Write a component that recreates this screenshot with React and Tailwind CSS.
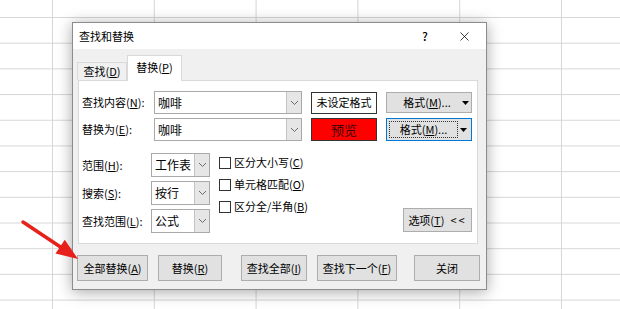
import React from 'react';
import { X } from 'lucide-react';

// small grey chevron used in the combo boxes
const Chevron = () => (
  <svg width="9" height="6" viewBox="0 0 9 6" fill="none">
    <path d="M1 1l3.5 3.5L8 1" stroke="#6b6b6b" strokeWidth="1" />
  </svg>
);

const Tri = () => (
  <svg width="7" height="4" viewBox="0 0 7 4">
    <path d="M0 0h7L3.5 4z" fill="#000" />
  </svg>
);

const Key = ({ children }) => <span className="underline underline-offset-1">{children}</span>;

const Combo = ({ value, width }) => (
  <div className={`flex h-[24px] ${width} border border-[#a9a9a9] bg-white`}>
    <div className="flex-1 flex items-center pl-[3px] text-[12px] leading-none">{value}</div>
    <div className="w-[15px] bg-[#e6e6e6] border-l border-[#c4c4c4] flex items-center justify-center">
      <Chevron />
    </div>
  </div>
);

const Check = ({ children }) => (
  <div className="flex items-center gap-[3px] h-[21px]">
    <div className="w-[12px] h-[12px] border border-[#333] bg-white" />
    <span className="text-[11px] leading-none">{children}</span>
  </div>
);

const Btn = ({ children, width }) => (
  <button className={`h-[26px] ${width} bg-[#e1e1e1] border border-[#adadad] text-[11px] leading-none flex items-center justify-center`}>
    {children}
  </button>
);

export default function App() {
  return (
    <div
      className="relative w-[620px] h-[309px] overflow-hidden bg-white text-black font-['Noto_Sans_CJK_SC','Noto_Sans',sans-serif] bg-[linear-gradient(to_right,#d6d6d6_1px,transparent_1px),linear-gradient(to_bottom,#d6d6d6_1px,transparent_1px)] [background-size:101.8px_25.7px] [background-position:52px_17px]"
    >
      {/* dialog window */}
      <div className="absolute left-[72px] top-[22px] w-[415px] h-[268px] flex flex-col bg-[#f0f0f0] border border-[#8c8c8c] shadow-[0_2px_14px_rgba(0,0,0,0.35)]">
        <div className="h-[26px] bg-white flex items-center pl-[6px] pr-[14px]">
          <span className="text-[11px]">查找和替换</span>
          <span className="ml-auto text-[12px] font-medium mr-[29px]">?</span>
          <X size={15} strokeWidth={1.2} />
        </div>

        <div className="pl-[4px] pr-[8px] pt-[6px]">
          {/* tabs */}
          <div className="flex items-end h-[25px] relative z-10">
            <div className="w-[50px] h-[18px] border border-b-0 border-[#d9d9d9] bg-[#f0f0f0] flex items-center justify-center text-[11px] leading-none">
              查找(<Key>D</Key>)
            </div>
            <div className="w-[55px] h-[26px] -mb-px border border-b-0 border-[#d9d9d9] bg-white flex items-center justify-center text-[11px] leading-none pb-[2px]">
              替换(<Key>P</Key>)
            </div>
          </div>

          {/* panel */}
          <div className="ml-[1px] h-[164px] bg-white border border-[#d9d9d9] pl-[3px] pr-[5px] pt-[10px]">
            <div className="flex flex-col gap-[4px]">
              <div className="flex items-center h-[23px]">
                <span className="w-[72px] text-[11px] leading-none">查找内容(<Key>N</Key>):</span>
                <div className="flex h-[23px] w-[148px] border border-[#a9a9a9] bg-white">
                  <div className="flex-1 flex items-center pl-[3px] text-[12px] leading-none">咖啡</div>
                  <div className="w-[15px] bg-[#e6e6e6] border-l border-[#c4c4c4] flex items-center justify-center"><Chevron /></div>
                </div>
                <div className="ml-[9px] w-[66px] h-[22px] border border-[#333] bg-white flex items-center justify-center text-[11px] leading-none">未设定格式</div>
                <div className="ml-[9px] w-[86px] h-[21px] bg-[#e1e1e1] border border-[#adadad] flex items-center text-[11px] leading-none">
                  <span className="flex-1 text-center pl-[8px]">格式(<Key>M</Key>)...</span>
                  <span className="w-[12px] flex justify-center"><Tri /></span>
                </div>
              </div>
              <div className="flex items-center h-[23px]">
                <span className="w-[72px] text-[11px] leading-none">替换为(<Key>E</Key>):</span>
                <div className="flex h-[23px] w-[148px] border border-[#a9a9a9] bg-white">
                  <div className="flex-1 flex items-center pl-[3px] text-[12px] leading-none">咖啡</div>
                  <div className="w-[15px] bg-[#e6e6e6] border-l border-[#c4c4c4] flex items-center justify-center"><Chevron /></div>
                </div>
                <div className="ml-[9px] w-[66px] h-[23px] border border-[#333] bg-[#ff0000] flex items-center justify-center text-[13px] leading-none text-[#3d0000]">预览</div>
                <div className="ml-[9px] w-[86px] h-[23px] bg-[#e1e1e1] border border-[#0078d7] flex items-center p-[2px] text-[11px] leading-none">
                  <span className="flex-1 h-full border border-dotted border-[#333] flex items-center justify-center">格式(<Key>M</Key>)...</span>
                  <span className="w-[11px] flex justify-center"><Tri /></span>
                </div>
              </div>
            </div>

            <div className="flex items-end mt-[12px]">
              <div className="flex flex-col gap-[4px]">
                <div className="flex items-center">
                  <span className="w-[69px] text-[11px] leading-none">范围(<Key>H</Key>):</span>
                  <Combo value="工作表" width="w-[59px]" />
                </div>
                <div className="flex items-center">
                  <span className="w-[69px] text-[11px] leading-none">搜索(<Key>S</Key>):</span>
                  <Combo value="按行" width="w-[59px]" />
                </div>
                <div className="flex items-center">
                  <span className="w-[69px] text-[11px] leading-none">查找范围(<Key>L</Key>):</span>
                  <Combo value="公式" width="w-[59px]" />
                </div>
              </div>
              <div className="self-start ml-[9px] -mt-[1px] flex flex-col gap-[1px]">
                <Check>区分大小写(<Key>C</Key>)</Check>
                <Check>单元格匹配(<Key>O</Key>)</Check>
                <Check>区分全/半角(<Key>B</Key>)</Check>
              </div>
              <button className="ml-auto mb-[1px] w-[69px] h-[24px] bg-[#e1e1e1] border border-[#adadad] text-[11px] leading-none flex items-center justify-center gap-[6px]">
                <span>选项(<Key>T</Key>)</span>
                <span className="tracking-[2px]">&lt;&lt;</span>
              </button>
            </div>
          </div>
        </div>

        {/* bottom buttons */}
        <div className="flex mt-[11px] pl-[4px]">
          <Btn width="w-[71px]">全部替换(<Key>A</Key>)</Btn>
          <div className="ml-[10px]"><Btn width="w-[64px]">替换(<Key>R</Key>)</Btn></div>
          <div className="ml-[19px]"><Btn width="w-[66px]">查找全部(<Key>I</Key>)</Btn></div>
          <div className="ml-[10px]"><Btn width="w-[80px]">查找下一个(<Key>F</Key>)</Btn></div>
          <div className="ml-[17px]"><Btn width="w-[66px]">关闭</Btn></div>
        </div>
      </div>

      {/* red pointer arrow */}
      <svg className="absolute left-0 top-0" width="620" height="309" viewBox="0 0 620 309">
        <line x1="23" y1="222" x2="62" y2="248" stroke="#e8201b" strokeWidth="3.5" strokeLinecap="round" />
        <path d="M78 259L55.5 253.5L64.8 239.8Z" fill="#e8201b" />
      </svg>
    </div>
  );
}
